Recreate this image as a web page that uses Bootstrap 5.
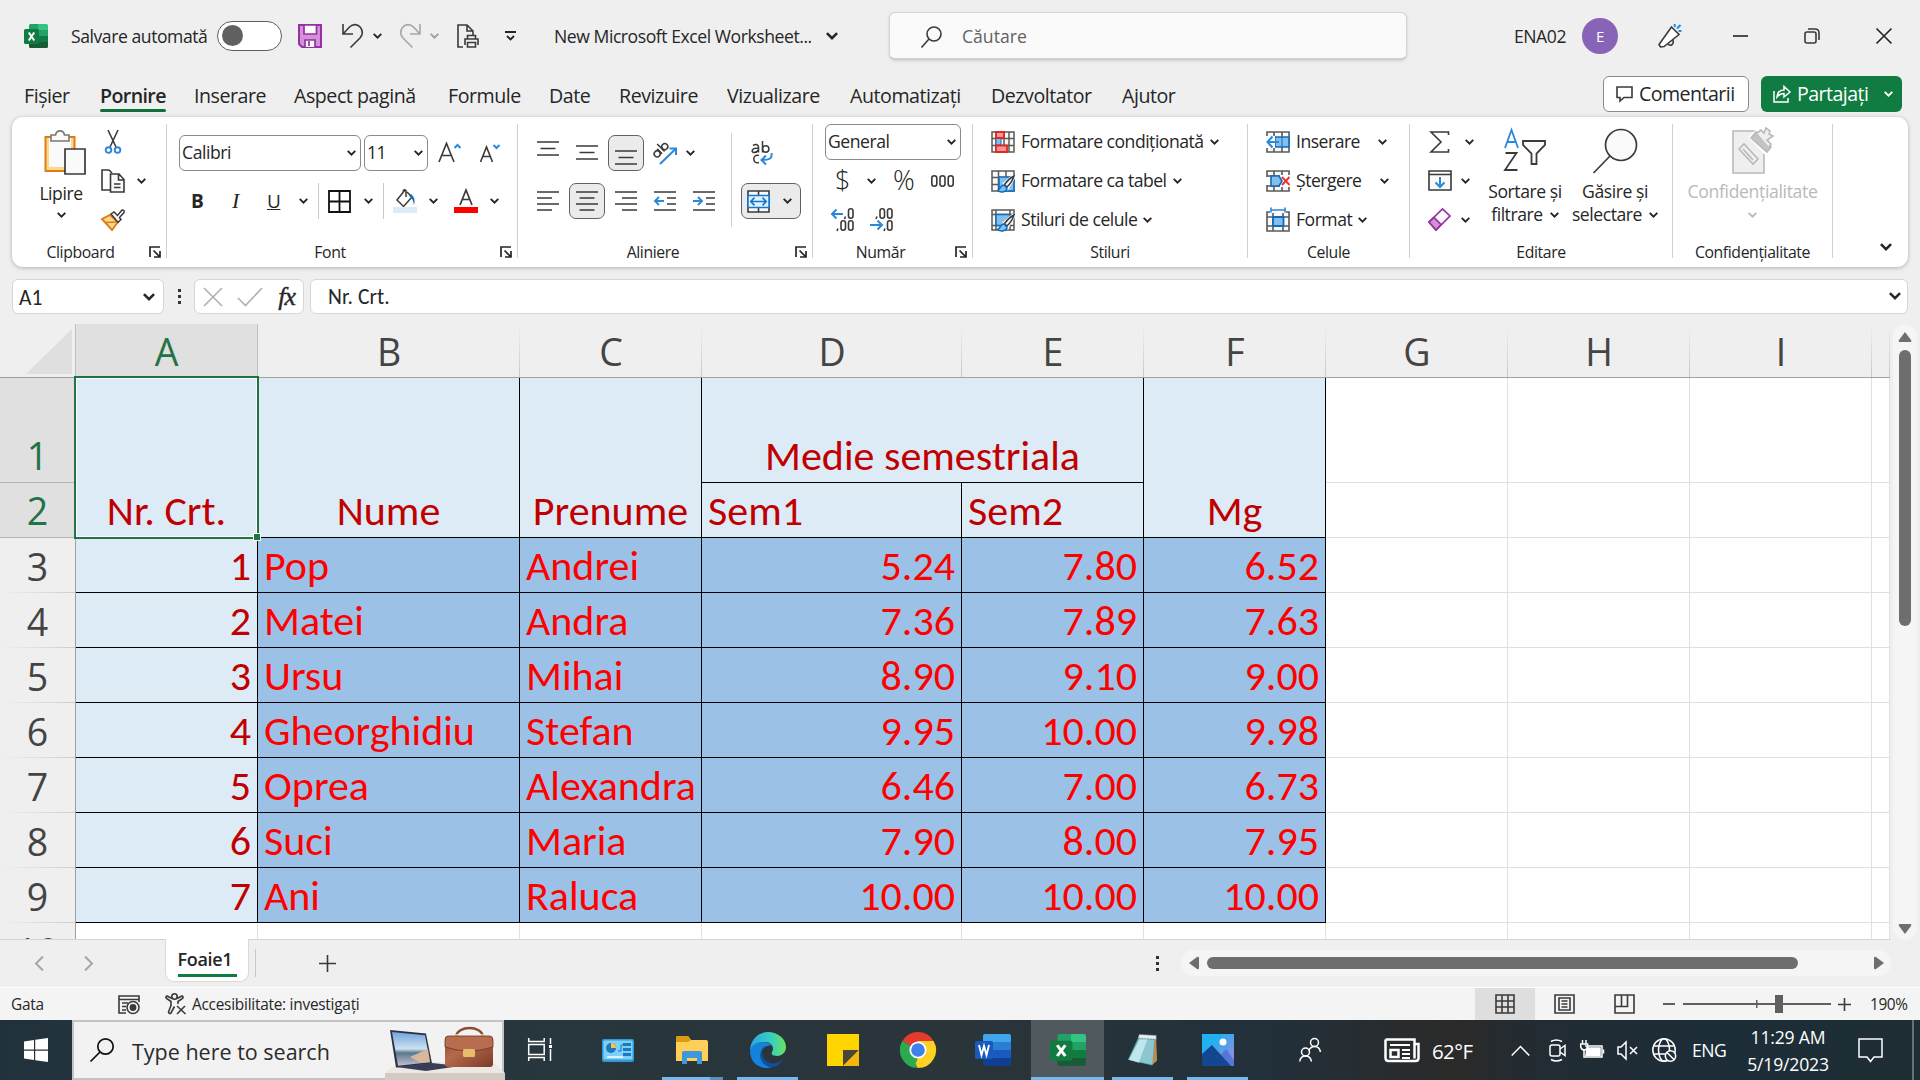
<!DOCTYPE html>
<html lang="ro">
<head>
<meta charset="utf-8">
<title>New Microsoft Excel Worksheet</title>
<link rel="stylesheet" href="https://cdn.jsdelivr.net/npm/bootstrap@5.3.0/dist/css/bootstrap.min.css">
<style>
body{width:1920px;height:1080px;overflow:hidden;background:#efefef;color:#262626;font-family:"Open Sans","Noto Sans",sans-serif;font-size:17.6px;letter-spacing:-.45px;line-height:1.2;white-space:nowrap}
svg{display:block;flex:none;overflow:visible}
.ic{fill:none;stroke:#3b3a39;stroke-width:1.6}
.chv{width:9px;height:6px;fill:none;stroke:#262626;stroke-width:1.9}
.chv-lg{width:12px;height:8px;fill:none;stroke:#262626;stroke-width:1.9}
.dim{opacity:.4}
.grow{display:grid;align-items:center}
.titlebar{height:72px;padding-left:24px;grid-template-columns:47px 146px 81px 44px 31px 26px 31px 27px 48px 49px 272px 63px 625px 68px 76px 75px 71px 72px 44px}
.titlebar>span,.status>span,.taskbar>span{padding-top:2px}
.toggle{width:65px;height:30px;border:1.5px solid #5e5e5e;border-radius:15px;background:#fff;padding:3px 4px}
.knob{width:21px;height:21px;border-radius:50%;background:#616161}
.searchbox{width:518px;height:48px;background:#fafafa;border:1px solid #d4d4d4;border-bottom:2px solid #cfcfcf;border-radius:6px;padding:2px 0 0 31px;gap:20px;color:#616161;letter-spacing:0;box-shadow:0 1px 3px #0002}
.avatar{width:36px;height:36px;border-radius:50%;background:#8764b8;color:#fff;font-size:15px}
.tabs-row{height:45px;padding:2px 0 0 24px;font-size:19.6px;grid-template-columns:76px 94px 100px 154px 101px 70px 108px 123px 141px 131px 481px 158px 159px}
.tab-on{font-weight:600;position:relative;letter-spacing:-.6px}
.tab-on::after{content:"";position:absolute;left:0;top:25px;width:66px;height:3px;border-radius:2px;background:#0f703b}
.topbtn{height:36px;border-radius:6px;letter-spacing:-.55px;margin-top:-3px}
.btn-com{width:146px;border:1px solid #8a8a8a;background:#fff;padding-left:12px;gap:6px}
.btn-share{width:141px;background:#107c41;color:#fff;padding-left:12px;gap:6px}
.btn-share .chv{stroke:#fff;margin-left:10px}
.ribbon{height:150px;margin:0 12px;background:#fff;border-radius:11px;box-shadow:0 1px 4px #0004}
.grp{height:150px;flex:none}
.grp-body{height:121px}
.grp-label{height:28px;font-size:15.8px;letter-spacing:-.4px}
.grp-label span{flex:1;text-align:center}
.grp-label svg{margin-right:5px}
.w-font .grp-label span,.w-align .grp-label span,.w-num .grp-label span{padding-right:7px}
.sepv{width:1px;background:#d0d0d0;margin:7px 0 9px;flex:none}
.sep-s{width:1px;height:36px;background:#c8c8c8}
.sep-m{width:1px;height:94px;margin-top:16px;background:#d0d0d0}
.three{padding-top:5px}
.three>*{height:39px}
.two{padding-top:12px}
.two>*{height:48px}
.w-clip{width:154px}.w-font{width:350px}.w-align{width:294px}.w-num{width:159px}.w-sty{width:274px}.w-cel{width:161px}.w-edt{width:262px}.w-conf{width:159px}
.paste{width:54px;margin:13px 13px 0 22px}
.copyrow{gap:12px}
.combo{height:36px;border:1px solid #8a8a8a;border-radius:6px;padding:0 4px 0 2px;background:#fff}
.c-face{width:182px}.c-size{width:64px}.c-num{width:136px;margin:0 0 0 12px}
.pressed{width:36px;height:36px;border:1px solid #616161;border-radius:7px;background:#ebebeb}
.pressed.merge{width:60px;gap:13px;margin-left:9px;padding-right:3px}
.font1{padding-left:12px;grid-template-columns:185px 75px 41px 30px}
.font2{padding-left:24px;grid-template-columns:39px 37px 32px 19px 10px 36px 19px 10px 36px 25px 36px 10px}
.fmt{font-size:19px}
.fmt.ital{font-family:"Liberation Serif",serif;font-style:italic;font-size:22px;padding-left:2px}
.align1{padding-left:19px;width:213px;grid-template-columns:39px 32px 44px 34px 20px}
.align2{padding-left:19px;width:213px;grid-template-columns:32px 46px 39px 39px 22px}
.num2{padding-left:22px;grid-template-columns:32px 26px 38px 30px}
.num3{padding-left:18px;grid-template-columns:39px 30px}
.dollar{font-size:27px;font-weight:300}.pct{font-size:27px;font-weight:300;letter-spacing:-2px}
.line-item{padding-left:18px;gap:6px;letter-spacing:-.5px}
.line-item .far{margin-left:12px}
.edt-l{padding-left:18px;width:68px}
.edt-l>*{grid-template-columns:33px 10px}
.bigbtn{line-height:23px;padding-top:11px;text-align:center}
.bigbtn svg.pic{margin:0 auto 6px}
.bigbtn .chv{display:inline-block;vertical-align:3px;margin-left:3px}
.sortbtn{width:86px}.findbtn{width:94px}
.greyed{color:#b9b9b9;letter-spacing:-.35px}
.greyed .chv{stroke:#b9b9b9;margin-left:0}
.fbar{height:57px;padding:12px 12px 10px}
.fbox{height:35px;background:#fff;border:1px solid #d6d6d6;border-radius:6px}
.namebox{width:152px;padding:0 8px 0 6px}
.fxbox{width:110px;padding:0 8px 0 9px}
.formula{margin-left:6px;padding:2px 6px 0 17px}
.fdots{width:30px}
.cal{font-family:Calibri,Carlito,Lato,sans-serif;letter-spacing:.1px;font-size:21.5px}
.fxglyph{font-family:"Liberation Serif",serif;font-style:italic;font-size:26px;letter-spacing:-1px;-webkit-text-stroke:.4px #262626}
.sheet{height:616px;width:1890px;overflow:hidden;flex:none;border-bottom:1px solid #d4d4d4}
.cells{table-layout:fixed;border-collapse:separate;border-spacing:0;width:1890px;letter-spacing:0;color:inherit}
.cells col.c0{width:76px}.cells col.c182{width:182px}.cells col.c262{width:262px}.cells col.c260{width:260px}.cells col.cl{width:18px}
.cells th{font-size:37.5px;font-weight:400;color:#444;padding:0;line-height:52px;text-align:center;height:55px;vertical-align:bottom}
.cells thead th{height:54px;line-height:51px;border-bottom:1px solid #a0a0a0;background:linear-gradient(#efefef,#c8c8c8) right/1px 100% no-repeat #efefef}
.cells thead th.on{background:#e0e0e0;border-right:1px solid #c0c0c0;color:#217346}
.cells thead th.corner{background:#efefef;border-right:1px solid #c0c0c0}
.cells tbody th{border-right:1px solid #a0a0a0;background:linear-gradient(90deg,#efefef,#cdcdcd) bottom/100% 1px no-repeat #efefef}
.cells tbody th.on{background:#e0e0e0;color:#217346;border-bottom:1px solid #b5b5b5}
.cells td{font-family:Calibri,Carlito,Lato,sans-serif;font-size:42px;line-height:52px;height:55px;padding:0 6px;vertical-align:bottom;background:#fff;border-right:1px solid #e0e0e0;border-bottom:1px solid #e0e0e0;overflow:visible}
.cells tr.tall>th{height:105px}
.cells td.hd{background:#ddebf7;color:#c00000;border-color:#000}
.cells td.dt{background:#9bc2e6;color:#f00;border-color:#000}
.selbox{position:absolute;left:-2px;top:-2px;right:-2px;bottom:-2px;border:2px solid #217346;box-shadow:inset 0 0 0 1px #fff;z-index:2}
.selbox::after{content:"";position:absolute;right:-3px;bottom:-3px;width:6px;height:6px;background:#217346;outline:1px solid #fff}
.vscroll{width:24px;margin-left:3px;height:616px;border-radius:12px;background:#f5f5f5;padding:8px 0 6px}
.vthumb{width:12px;height:276px;border-radius:6px;background:#6e6e6e;margin-top:8px}
.sheetbar{height:47px;padding:0 0 1px 35px;grid-template-columns:49px 81px 90px 64px 837px 25px 710px}
.sheet-tab{width:84px;height:43px;background:#fff;border:1px solid #d9d9d9;border-top:0;border-radius:0 0 9px 9px;align-self:start;margin-top:-1px}
.sheet-tab b{font-weight:600;letter-spacing:-.35px;border-bottom:3px solid #107c41;line-height:28px;height:32px;margin-top:6px;min-width:59px;font-size:18px}
.hscroll{width:710px;height:26px;border-radius:13px;background:#f5f5f5;padding:0 7px 0 8px;margin-top:-1px}
.hthumb{width:591px;height:12px;border-radius:6px;background:#6e6e6e;margin-left:8px}
.status{height:33px;background:#f4f4f4;border-top:1px solid #fff;padding-left:11px;font-size:15.4px;letter-spacing:-.25px;grid-template-columns:107px 47px 27px 1283px 79px 60px 49px 20px 155px 32px 45px}
.status>span:last-child{letter-spacing:-.4px}
.view-on{width:60px;height:32px;background:#dedede}
.taskbar{height:60px;padding-left:24px;color:#fff;background:linear-gradient(90deg,#22323c,#27363d 26%,#2a353a 50%,#22303a 66%,#2b2a29 76%,#222c33 80%,#1c2d38 90%,#1f2e33);grid-template-columns:48px 456px 59px 75px 75px 75px 75px 75px 69px 81px 75px 112px 85px 48px 79px 38px 31px 37px 35px 40px 48px 118px 54px 8px}
.tsearch{width:432px;height:60px;background:#f2f2f2;border:2.5px solid #c3c3c3;color:#2b2b2b;font-size:21.5px;letter-spacing:0;padding-left:16px;gap:18px}
.tsearch span{padding-top:3px}
.tsearch .art{margin:0 -2.5px -2.5px auto}
.app{width:61px;height:60px;display:flex;align-items:center;justify-content:center;position:relative}
.run::after{content:"";position:absolute;bottom:0;left:0;right:0;height:3px;background:#76b9ed}
.run.multi::after{background:linear-gradient(90deg,#76b9ed 78%,#5f8fb5 78%)}
.app.cur{width:73px;background:#50595d}
.w{fill:none;stroke:#fff;stroke-width:1.5}
.temp{font-size:20.5px;letter-spacing:-.6px}
.clock{line-height:27px;text-align:center;width:96px;letter-spacing:-.2px;padding-top:2px}
</style>
<script src="https://cdn.jsdelivr.net/npm/bootstrap@5.3.0/dist/js/bootstrap.bundle.min.js"></script>
</head>
<body class="d-flex flex-column">
<svg width="0" height="0" class="position-absolute">
<symbol id="chev" viewBox="0 0 9 6"><path d="M.7 .8 4.5 4.6 8.3 .8"/></symbol>
<symbol id="launch" viewBox="0 0 12 12"><path d="M1 11V1h10M4.500 4.500l6 6M11 5v6H5" fill="none" stroke="#262626" stroke-width="1.700"/></symbol>
<symbol id="xl" viewBox="0 0 24 24" preserveAspectRatio="none"><path d="M5 1.500Q5 0 6.500 0H14v6H5z" fill="#21a366"/><path d="M14 0h8.500Q24 0 24 1.500V6H14z" fill="#33c481"/><path d="M5 6h9v6H5z" fill="#107c41"/><path d="M14 6h10v6H14z" fill="#21a366"/><path d="M5 12h9v6H5z" fill="#185c37"/><path d="M14 12h10v6H14z" fill="#107c41"/><path d="M5 18h19v4.500q0 1.500-1.500 1.500h-16Q5 24 5 22.500z" fill="#185c37"/><rect y="5" width="15" height="15" rx="1.500" fill="#107c41"/><path d="M4.800 8.500l5.400 8M10.200 8.500l-5.400 8" stroke="#fff" stroke-width="2" fill="none"/></symbol>
<symbol id="brush" viewBox="0 0 18 18"><path d="M17 1 8 9l2.500 3z" fill="#fff" stroke="#fff" stroke-width="4"/><path d="M17 1C13 3 10 6 7.500 9.500L10 12c3-3 6-7 7-11z" fill="#fafafa" stroke="#3b3a39" stroke-width="1.400"/><path d="M7 10c-4 0-3 4-6.500 5.500C4 18 10 17 10 13z" fill="#83beec" stroke="#0f6cbd" stroke-width="1.500"/></symbol>
</svg>

<header class="titlebar grow">
  <svg width="24" height="24"><use href="#xl"/></svg>
  <span>Salvare automată</span>
  <div class="toggle"><div class="knob"></div></div>
  <svg width="24" height="24" viewBox="0 0 24 24"><path d="M1 1h22v22H4l-3-3z" fill="#d490d8" stroke="#9332a0" stroke-width="2"/><path d="M6 1h12.500v9H6zM7 23v-7h10v7M11 17v5" fill="#fafafa" stroke="#9332a0" stroke-width="1.700"/></svg>
  <svg class="ic" width="22" height="24" viewBox="0 0 22 24"><path d="M1 0v10h10M1.500 9.500 7.500 3C11-.500 16 0 18.500 3.500S20.500 11 18 14L8.500 23.500"/></svg>
  <svg class="chv"><use href="#chev"/></svg>
  <svg class="ic dim" width="22" height="24" viewBox="0 0 22 24"><path d="M21 0v10H11M20.500 9.500 14.500 3C11-.500 6 0 3.500 3.500S1.500 11 4 14l9.500 9.500"/></svg>
  <svg class="chv dim"><use href="#chev"/></svg>
  <svg class="ic" width="22" height="24" viewBox="0 0 22 24"><path d="M6 23H1V1h9l6 6v4M10 1v6h6M10.500 15v-3.500h8V15M8 21v-6h13v6M10.500 18.500h8V23h-8z"/></svg>
  <svg class="ic" width="11" height="10" viewBox="0 0 11 10"><path d="M0 1h11M2 5l3.500 3.500L9 5" stroke="#262626" stroke-width="1.900"/></svg>
  <span>New Microsoft Excel Worksheet...</span>
  <svg class="chv-lg"><use href="#chev"/></svg>
  <div class="searchbox d-flex align-items-center"><svg class="ic" width="21" height="22" viewBox="0 0 21 22"><circle cx="13" cy="8" r="7"/><path d="M8 13 .500 21.500"/></svg>Căutare</div>
  <span>ENA02</span>
  <div class="avatar d-flex align-items-center justify-content-center">E</div>
  <svg class="ic" width="24" height="24" viewBox="0 0 24 24"><path d="M13.500 3 21 10.500 6 22.500l-3.500.5L1 20.500z" fill="#fff"/><path d="M10 20c3 3 6 0 5-4"/><path d="M16.500 0l.5 3M22.500 1 19 4.500M20.500 7h3" stroke="#2b88d8" stroke-width="2"/></svg>
  <svg class="ic" width="15" height="2"><path d="M0 1h15" stroke="#222"/></svg>
  <svg class="ic" width="16" height="16" viewBox="0 0 16 16"><rect x="1" y="4" width="11" height="11" rx="2"/><path d="M4 1h7q4 0 4 4v7"/></svg>
  <svg class="ic" width="16" height="16" viewBox="0 0 16 16"><path d="M.5.5l15 15M15.500.5l-15 15" stroke="#222"/></svg>
</header>

<nav class="tabs-row grow">
  <span>Fișier</span><span class="tab-on">Pornire</span><span>Inserare</span><span>Aspect pagină</span><span>Formule</span><span>Date</span><span>Revizuire</span><span>Vizualizare</span><span>Automatizați</span><span>Dezvoltator</span><span>Ajutor</span>
  <div class="topbtn btn-com d-flex align-items-center"><svg class="ic" width="17" height="16" viewBox="0 0 17 16"><path d="M1 1h15v10.500H8L4 15v-3.500H1z"/></svg>Comentarii</div>
  <div class="topbtn btn-share d-flex align-items-center"><svg width="18" height="18" viewBox="0 0 18 18" fill="none" stroke="#fff" stroke-width="1.500"><path d="M1 6v11h14v-4M4 12c.5-5 3-7 7-7V1.500L17 7l-6 5V8.500C8 8.500 6 9.500 4 12z"/></svg><span>Partajați</span><svg class="chv"><use href="#chev"/></svg></div>
</nav>

<section class="ribbon d-flex flex-shrink-0">
  <div class="grp w-clip">
    <div class="grp-body d-flex">
      <div class="paste d-flex flex-column align-items-center">
        <svg width="42" height="45" viewBox="0 0 42 45" class="ms-2"><path d="M1.500 7h29v34h-29z" fill="#fbd98b" stroke="#e07b16" stroke-width="2"/><path d="M5 8h22v29H5z" fill="#fafafa"/><path d="M7 11V5h4.500c1-5.500 8-5.500 9 0H25v6z" fill="#fafafa" stroke="#797775" stroke-width="1.600"/><path d="M21 19h20v25H21z" fill="#fafafa" stroke="#3b3a39" stroke-width="1.700"/></svg>
        <span class="mt-2">Lipire</span><svg class="chv mt-2"><use href="#chev"/></svg>
      </div>
      <div class="three">
        <div class="d-flex align-items-center ps-1"><svg class="ic" width="16" height="24" viewBox="0 0 16 24"><path d="M3 0l8 17M13 0 5 17"/><circle cx="3.500" cy="20" r="2.800" stroke="#2b88d8" stroke-width="1.900"/><circle cx="12.500" cy="20" r="2.800" stroke="#2b88d8" stroke-width="1.900"/></svg></div>
        <div class="copyrow d-flex align-items-center"><svg class="ic" width="24" height="24" viewBox="0 0 24 24"><path d="M9 21H1V1h7l3 3"/><path d="M9.500 5H18l5 5.500V23H9.500zM17.500 5v6H23M13 15h6.500M13 18.500h6.500" fill="#fafafa"/></svg><svg class="chv"><use href="#chev"/></svg></div>
        <div class="d-flex align-items-center"><svg width="24" height="22" viewBox="0 0 24 22"><path d="M1 10 9 6l8 7-6 8z" fill="#fbd98b" stroke="#e07b16" stroke-width="1.900"/><path d="M4 13.500l12-.5" stroke="#e07b16" stroke-width="1.500"/><path d="M10 5l3-2 3.500 3.500L21 1q3 0 2 2.500l-4.500 5 1.500 2-3 3z" fill="#fafafa" stroke="#3b3a39" stroke-width="1.500"/></svg></div>
      </div>
    </div>
    <div class="grp-label d-flex align-items-center"><span>Clipboard</span><svg width="12" height="12"><use href="#launch"/></svg></div>
  </div>
  <div class="sepv"></div>

  <div class="grp w-font">
    <div class="grp-body two">
      <div class="grow font1">
        <div class="combo c-face d-flex align-items-center justify-content-between">Calibri<svg class="chv"><use href="#chev"/></svg></div>
        <div class="combo c-size d-flex align-items-center justify-content-between">11<svg class="chv"><use href="#chev"/></svg></div>
        <svg class="ic" width="22" height="20" viewBox="0 0 22 20"><path d="M0 19 7.500.500 15 19M2.700 12.500h9.600"/><path d="M15.500 5l3-3 3 3" stroke="#2b88d8" stroke-width="2"/></svg>
        <svg class="ic" width="20" height="20" viewBox="0 0 20 20"><path d="M.5 19 6.500 4l6 15M2.500 13.500h8"/><path d="M13.500 2l3 3 3-3" stroke="#2b88d8" stroke-width="2"/></svg>
      </div>
      <div class="grow font2">
        <b class="fmt">B</b><span class="fmt ital">I</span><u class="fmt">U</u><svg class="chv"><use href="#chev"/></svg><div class="sep-s"></div>
        <svg width="23" height="23" viewBox="0 0 23 23"><path d="M1 1h21v21H1zM11.500 1v21M1 11.500h21" fill="none" stroke="#111" stroke-width="1.800"/></svg>
        <svg class="chv"><use href="#chev"/></svg><div class="sep-s"></div>
        <svg width="24" height="24" viewBox="0 0 24 24"><path d="M12 1 4 11l6.500 6.500L19 8l-5-5M13 8V1.500q-2-2-3 1" fill="none" stroke="#3b3a39" stroke-width="1.500"/><path d="M18 5q5 4 3 11-1-7-5-9z" fill="#0f6cbd"/><path d="M0 18h24v6H0z" fill="#ddebf7"/></svg>
        <svg class="chv"><use href="#chev"/></svg>
        <svg width="24" height="24" viewBox="0 0 24 24"><path d="M6 16 12 1l6 15M8.200 10.500h7.600" fill="none" stroke="#3b3a39" stroke-width="1.700"/><path d="M0 18h24v6H0z" fill="#f00"/></svg>
        <svg class="chv"><use href="#chev"/></svg>
      </div>
    </div>
    <div class="grp-label d-flex align-items-center"><span>Font</span><svg width="12" height="12"><use href="#launch"/></svg></div>
  </div>
  <div class="sepv"></div>

  <div class="grp w-align">
    <div class="grp-body d-flex">
      <div class="two">
        <div class="grow align1">
          <svg class="ic" width="22" height="24" viewBox="0 0 22 24"><path d="M0 1h22M3.500 7.500h15M0 14h22"/></svg>
          <svg class="ic" width="22" height="24" viewBox="0 0 22 24"><path d="M0 5h22M3.500 11.500h15M0 18h22"/></svg>
          <div class="pressed d-flex align-items-center justify-content-center"><svg class="ic" width="22" height="24" viewBox="0 0 22 24"><path d="M0 10h22M3.500 16.500h15M0 23h22"/></svg></div>
          <svg width="25" height="24" viewBox="0 0 25 24" fill="none" stroke="#3b3a39" stroke-width="1.500"><g transform="rotate(-45 8 10)"><circle cx="4" cy="10" r="3"/><path d="M7.500 6.500v7M11 3v10.500"/><circle cx="14.500" cy="10.300" r="3"/></g><path d="M8 23 23.500 8M17.500 7.500H24V14" stroke="#2b88d8" stroke-width="2"/></svg>
          <svg class="chv"><use href="#chev"/></svg>
        </div>
        <div class="grow align2">
          <svg class="ic" width="22" height="20" viewBox="0 0 22 20"><path d="M0 1h22M0 7h15M0 13h22M0 19h15"/></svg>
          <div class="pressed d-flex align-items-center justify-content-center"><svg class="ic" width="22" height="20" viewBox="0 0 22 20"><path d="M0 1h22M3.500 7h15M0 13h22M3.500 19h15"/></svg></div>
          <svg class="ic" width="22" height="20" viewBox="0 0 22 20"><path d="M0 1h22M7 7h15M0 13h22M7 19h15"/></svg>
          <svg class="ic" width="22" height="20" viewBox="0 0 22 20"><path d="M0 1h22M13 7h9M13 13h9M0 19h22"/><path d="M10 10H1M5 6l-4 4 4 4" stroke="#2b88d8" stroke-width="1.900"/></svg>
          <svg class="ic" width="22" height="20" viewBox="0 0 22 20"><path d="M0 1h22M13 7h9M13 13h9M0 19h22"/><path d="M0 10h9M5 6l4 4-4 4" stroke="#2b88d8" stroke-width="1.900"/></svg>
        </div>
      </div>
      <div class="sep-m"></div>
      <div class="two">
        <div class="d-flex align-items-center ps-3 ms-1">
          <svg width="21" height="24" viewBox="0 0 21 24" fill="none" stroke="#3b3a39" stroke-width="1.500"><path d="M1 4.500q4-2.500 5.500 1v6M6.500 7.500C-1 6.500-1 11.500 2 11.500q3 0 4.500-2.500M10.500 0v11.500"/><circle cx="13.700" cy="8" r="3.200"/><path d="M7 14.500c-7-2-7 9 0 7"/><path d="M19.500 12c1 6-3 7-9 7M14 14.500 9.500 19l4.500 4.500" stroke="#2b88d8" stroke-width="2"/></svg>
        </div>
        <div class="d-flex align-items-center">
          <div class="pressed merge d-flex align-items-center justify-content-center"><svg width="23" height="23" viewBox="0 0 23 23"><path d="M1 1h21v21H1zM11.500 1v5M11.500 17v5" fill="#fafafa" stroke="#3b3a39" stroke-width="1.600"/><path d="M1 5.500h21v12H1z" fill="#e6f2fb" stroke="#0f7ad1" stroke-width="1.500"/><path d="M4 11.500h15M7.500 7.700 3.800 11.500l3.700 3.800M15.500 7.700l3.700 3.800-3.700 3.800" fill="none" stroke="#0f7ad1" stroke-width="1.700"/></svg><svg class="chv"><use href="#chev"/></svg></div>
        </div>
      </div>
    </div>
    <div class="grp-label d-flex align-items-center"><span>Aliniere</span><svg width="12" height="12"><use href="#launch"/></svg></div>
  </div>
  <div class="sepv"></div>

  <div class="grp w-num">
    <div class="grp-body three">
      <div class="d-flex align-items-center"><div class="combo c-num d-flex align-items-center justify-content-between">General<svg class="chv"><use href="#chev"/></svg></div></div>
      <div class="grow num2"><span class="dollar">$</span><svg class="chv"><use href="#chev"/></svg><span class="pct">%</span>
        <svg class="ic" width="23" height="12" viewBox="0 0 23 12" stroke-width="1.300"><rect x=".8" y=".8" width="5" height="10.400" rx="2.500"/><rect x="9" y=".8" width="5" height="10.400" rx="2.500"/><rect x="17.200" y=".8" width="5" height="10.400" rx="2.500"/></svg></div>
      <div class="grow num3">
        <svg class="ic" width="23" height="23" viewBox="0 0 23 23"><rect x="17.500" y=".8" width="4.500" height="9.400" rx="2.200"/><rect x="10" y="12.800" width="4.500" height="9.400" rx="2.200"/><rect x="17.500" y="12.800" width="4.500" height="9.400" rx="2.200"/><path d="M14.500 8.500 13.500 11M7 20.500 6 23"/><path d="M12 6H1M5.500 1.500 1 6l4.500 4.500" stroke="#2b88d8" stroke-width="2"/></svg>
        <svg class="ic" width="23" height="23" viewBox="0 0 23 23"><rect x="10" y=".8" width="4.500" height="9.400" rx="2.200"/><rect x="17.500" y=".8" width="4.500" height="9.400" rx="2.200"/><rect x="17.500" y="12.800" width="4.500" height="9.400" rx="2.200"/><path d="M7 8.500 6 11M15 20.500 14 23"/><path d="M0 17h12M7.500 12.500 12 17l-4.500 4.500" stroke="#2b88d8" stroke-width="2"/></svg>
      </div>
    </div>
    <div class="grp-label d-flex align-items-center"><span>Număr</span><svg width="12" height="12"><use href="#launch"/></svg></div>
  </div>
  <div class="sepv"></div>

  <div class="grp w-sty">
    <div class="grp-body three">
      <div class="line-item d-flex align-items-center"><svg width="24" height="22" viewBox="0 0 24 22"><path d="M1 1h22v20H1zM1 7.500h22M1 14.500h22M5 1v20M13 1v20M18 1v20" fill="#fafafa" stroke="#5a5957" stroke-width="1.500"/><path d="M5 7h5v7H5z" fill="#83beec" stroke="#0f6cbd"/><path d="M5 1h8v6H5zM5 14.500h11V21H5z" fill="#ff9199" stroke="#d92c20" stroke-width="1.800"/></svg>Formatare condiționată<svg class="chv"><use href="#chev"/></svg></div>
      <div class="line-item d-flex align-items-center"><svg width="24" height="22" viewBox="0 0 24 22"><path d="M1 1h22v20H1zM1 7.500h22M1 14.500h22M7.500 1v20M15 1v20" fill="#fafafa" stroke="#5a5957" stroke-width="1.500"/><path d="M8 7h15v14H8z" fill="#83beec" stroke="#0f6cbd" stroke-width="1.500"/><use href="#brush" x="6" y="5" width="18" height="18"/></svg>Formatare ca tabel<svg class="chv"><use href="#chev"/></svg></div>
      <div class="line-item d-flex align-items-center"><svg width="24" height="22" viewBox="0 0 24 22"><path d="M1 1h22v20H1zM1 5.500h22M1 16.500h22M5 1v20M19 1v20" fill="#fafafa" stroke="#5a5957" stroke-width="1.500"/><path d="M5 5.500h14v11H5z" fill="#83beec" stroke="#0f6cbd" stroke-width="1.500"/><use href="#brush" x="6" y="5" width="18" height="18"/></svg>Stiluri de celule<svg class="chv"><use href="#chev"/></svg></div>
    </div>
    <div class="grp-label d-flex align-items-center"><span>Stiluri</span></div>
  </div>
  <div class="sepv"></div>

  <div class="grp w-cel">
    <div class="grp-body three">
      <div class="line-item d-flex align-items-center"><svg width="24" height="22" viewBox="0 0 24 22"><path d="M1 1h22v20H1zM8 1v20M16 1v20" fill="#fafafa" stroke="#5a5957" stroke-width="1.600"/><path d="M9 6h14v10H9z" fill="#83beec" stroke="#0f6cbd" stroke-width="1.600"/><path d="M0 5h9v12H0z" fill="#fff"/><path d="M16 6v10" stroke="#0f6cbd"/><path d="M13 11H1.500M6.500 5.500 1.500 11l5 5.500" fill="none" stroke="#2b88d8" stroke-width="2.100"/></svg>Inserare<svg class="chv far"><use href="#chev"/></svg></div>
      <div class="line-item d-flex align-items-center"><svg width="24" height="22" viewBox="0 0 24 22"><path d="M1 1h22v20H1zM1 6h22M1 16h22M8 1v20M16 1v20" fill="#fafafa" stroke="#5a5957" stroke-width="1.600"/><path d="M0 7h4v8H0zM14 5h10v12H14z" fill="#fff"/><path d="M5 6h8l3 5-3 5H5z" fill="#83beec" stroke="#0f6cbd" stroke-width="1.600"/><path d="M16 7l7.500 8M23.500 7 16 15" stroke="#e8382e" stroke-width="2"/></svg>Ștergere<svg class="chv far"><use href="#chev"/></svg></div>
      <div class="line-item d-flex align-items-center"><svg width="24" height="24" viewBox="0 0 24 24"><path d="M4 4H1v19h22V4h-3M1 9h22M1 18h22M7 5v18M17 5v18" fill="#fafafa" stroke="#5a5957" stroke-width="1.600"/><path d="M7 9h10.500v9H7z" fill="#83beec" stroke="#0f6cbd" stroke-width="1.800"/><path d="M5 2h14M5-.500v5M19-.500v5" stroke="#2b88d8" stroke-width="1.600"/></svg>Format<svg class="chv"><use href="#chev"/></svg></div>
    </div>
    <div class="grp-label d-flex align-items-center"><span>Celule</span></div>
  </div>
  <div class="sepv"></div>

  <div class="grp w-edt">
    <div class="grp-body d-flex">
      <div class="edt-l three">
        <div class="grow"><svg class="ic" width="22" height="22" viewBox="0 0 22 22"><path d="M20.500 4V1H3l10 10L3 21h17.500v-3"/></svg><svg class="chv ms-1"><use href="#chev"/></svg></div>
        <div class="grow"><svg class="ic" width="24" height="21" viewBox="0 0 24 21"><path d="M1 1h22v19H1zM1 4.500h22" fill="#fafafa"/><path d="M12 7v10M7.500 12.500 12 17l4.500-4.500" stroke="#2b88d8" stroke-width="2"/></svg><svg class="chv"><use href="#chev"/></svg></div>
        <div class="grow"><svg width="23" height="23" viewBox="0 0 23 23"><path d="M1 14 14.500 1l7.500 7L8 22z" fill="#fafafa" stroke="#9332a0" stroke-width="1.700"/><path d="M1 14l5-4.500 7 7L8 22z" fill="#d490d8" stroke="#9332a0" stroke-width="1.700"/></svg><svg class="chv"><use href="#chev"/></svg></div>
      </div>
      <div class="bigbtn sortbtn ms-1"><svg class="pic" width="42" height="46" viewBox="0 0 42 46" fill="none" stroke-width="1.800"><path d="M1 20 7.500 2l6.500 18M3 14h9" stroke="#2b88d8"/><path d="M1.500 25h11L1 42h12.500" stroke="#3b3a39"/><path d="M19 13h22v4l-8.500 8.500V36h-5V25.500L19 17z" fill="#fafafa" stroke="#3b3a39"/></svg>Sortare și<br>filtrare <svg class="chv"><use href="#chev"/></svg></div>
      <div class="bigbtn findbtn"><svg class="pic" width="44" height="46" viewBox="0 0 44 46" fill="none" stroke="#3b3a39" stroke-width="1.700"><circle cx="28" cy="17" r="15.500" fill="#fafafa"/><path d="M17 28 .500 45"/></svg>Găsire și<br>selectare <svg class="chv"><use href="#chev"/></svg></div>
    </div>
    <div class="grp-label d-flex align-items-center"><span>Editare</span></div>
  </div>
  <div class="sepv"></div>

  <div class="grp w-conf">
    <div class="grp-body">
      <div class="bigbtn greyed"><svg class="pic" width="42" height="46" viewBox="0 0 42 46" fill="#efefef" stroke="#b9b9b9" stroke-width="1.600"><path d="M1 3h31v42H1z"/><path d="M16 9 29-3l15 17-11 13z" fill="#fff" stroke="none"/><path d="M7 21l5-5 14 15-5 5zM11 21l10 11"/><path d="M19 10l5-6 15 15-4 5z" fill="#c4c4c4"/><path d="M25 5l4-3 3 3 2-5 4 3-1 3 4 2-6 4 4 4-2 3"/></svg>Confidențialitate<br><svg class="chv"><use href="#chev"/></svg></div>
    </div>
    <div class="grp-label d-flex align-items-center"><span>Confidențialitate</span></div>
  </div>
  <div class="sepv"></div>
  <div class="ms-auto d-flex align-items-end pe-3 pb-3"><svg class="chv-lg"><use href="#chev"/></svg></div>
</section>

<section class="fbar d-flex align-items-start flex-shrink-0">
  <div class="fbox namebox d-flex align-items-center justify-content-between cal"><span class="pt-1">A1</span><svg class="chv-lg"><use href="#chev"/></svg></div>
  <div class="fdots fbox bg-transparent border-0 d-flex align-items-center justify-content-center"><svg width="3" height="15" fill="#333"><path d="M0 0h3v3H0zM0 6h3v3H0zM0 12h3v3H0z"/></svg></div>
  <div class="fbox fxbox d-flex align-items-center justify-content-between">
    <svg class="ic dim" width="18" height="18" viewBox="0 0 18 18"><path d="M0 0l18 18M18 0 0 18"/></svg>
    <svg class="ic dim" width="24" height="18" viewBox="0 0 24 18"><path d="M0 10l7.500 7.500L24 0"/></svg>
    <span class="fxglyph">fx</span>
  </div>
  <div class="fbox formula flex-grow-1 d-flex align-items-center justify-content-between cal"><span>Nr. Crt.</span><svg class="chv-lg mb-1"><use href="#chev"/></svg></div>
</section>

<main class="d-flex flex-shrink-0">
<div class="sheet">
<table class="cells">
<colgroup><col class="c0"><col class="c182"><col class="c262"><col class="c182"><col class="c260"><col class="c182"><col class="c182"><col class="c182"><col class="c182"><col class="c182"><col class="cl"></colgroup>
<thead><tr><th class="corner"><svg width="76" height="53"><path d="M72 5v45H26z" fill="#dfdfdf"/></svg></th><th class="on">A</th><th>B</th><th>C</th><th>D</th><th>E</th><th>F</th><th>G</th><th>H</th><th>I</th><th></th></tr></thead>
<tbody>
<tr class="tall"><th class="on">1</th><td class="hd text-center position-relative px-0" rowspan="2">Nr. Crt.<div class="selbox"></div></td><td class="hd text-center" rowspan="2">Nume</td><td class="hd text-center px-0" rowspan="2">Prenume</td><td class="hd text-center" colspan="2">Medie semestriala</td><td class="hd text-center" rowspan="2">Mg</td><td></td><td></td><td></td><td></td></tr>
<tr><th class="on">2</th><td class="hd">Sem1</td><td class="hd">Sem2</td><td></td><td></td><td></td><td></td></tr>
<tr><th>3</th><td class="hd text-end">1</td><td class="dt">Pop</td><td class="dt">Andrei</td><td class="dt text-end">5.24</td><td class="dt text-end">7.80</td><td class="dt text-end">6.52</td><td></td><td></td><td></td><td></td></tr>
<tr><th>4</th><td class="hd text-end">2</td><td class="dt">Matei</td><td class="dt">Andra</td><td class="dt text-end">7.36</td><td class="dt text-end">7.89</td><td class="dt text-end">7.63</td><td></td><td></td><td></td><td></td></tr>
<tr><th>5</th><td class="hd text-end">3</td><td class="dt">Ursu</td><td class="dt">Mihai</td><td class="dt text-end">8.90</td><td class="dt text-end">9.10</td><td class="dt text-end">9.00</td><td></td><td></td><td></td><td></td></tr>
<tr><th>6</th><td class="hd text-end">4</td><td class="dt">Gheorghidiu</td><td class="dt">Stefan</td><td class="dt text-end">9.95</td><td class="dt text-end">10.00</td><td class="dt text-end">9.98</td><td></td><td></td><td></td><td></td></tr>
<tr><th>7</th><td class="hd text-end">5</td><td class="dt">Oprea</td><td class="dt">Alexandra</td><td class="dt text-end">6.46</td><td class="dt text-end">7.00</td><td class="dt text-end">6.73</td><td></td><td></td><td></td><td></td></tr>
<tr><th>8</th><td class="hd text-end">6</td><td class="dt">Suci</td><td class="dt">Maria</td><td class="dt text-end">7.90</td><td class="dt text-end">8.00</td><td class="dt text-end">7.95</td><td></td><td></td><td></td><td></td></tr>
<tr><th>9</th><td class="hd text-end">7</td><td class="dt">Ani</td><td class="dt">Raluca</td><td class="dt text-end">10.00</td><td class="dt text-end">10.00</td><td class="dt text-end">10.00</td><td></td><td></td><td></td><td></td></tr>
<tr><th>10</th><td></td><td></td><td></td><td></td><td></td><td></td><td></td><td></td><td></td><td></td></tr>
</tbody>
</table>
</div>
<div class="vscroll d-flex flex-column align-items-center"><svg width="14" height="10" fill="#6e6e6e"><path d="M7 0l6 8q1 2-1 2H2Q0 10 1 8z"/></svg><div class="vthumb"></div><svg class="mt-auto" width="14" height="10" fill="#6e6e6e"><path d="M7 10 1 2Q0 0 2 0h10q2 0 1 2z"/></svg></div>
</main>

<section class="sheetbar grow flex-shrink-0">
  <svg class="ic dim" width="9" height="15" viewBox="0 0 9 15"><path d="M8 .5 1 7.500l7 7" stroke-width="2"/></svg>
  <svg class="ic dim" width="9" height="15" viewBox="0 0 9 15"><path d="M1 .5l7 7-7 7" stroke-width="2"/></svg>
  <div class="sheet-tab d-flex justify-content-center"><b>Foaie1</b></div>
  <svg width="16" height="28"><path d="M.5 0v28" stroke="#c8c8c8"/></svg>
  <svg class="ic" width="17" height="17" viewBox="0 0 17 17"><path d="M8.500 0v17M0 8.500h17"/></svg>
  <svg width="3" height="15" fill="#333"><path d="M0 0h3v3H0zM0 6h3v3H0zM0 12h3v3H0z"/></svg>
  <div class="hscroll d-flex align-items-center"><svg width="10" height="14" fill="#6e6e6e"><path d="M0 7l8-6q2-1 2 1v10q0 2-2 1z"/></svg><div class="hthumb"></div><svg class="ms-auto" width="10" height="14" fill="#6e6e6e"><path d="M10 7 2 1Q0 0 0 2v10q0 2 2 1z"/></svg></div>
</section>

<section class="status grow flex-shrink-0">
  <span>Gata</span>
  <svg class="ic" width="22" height="19" viewBox="0 0 22 19"><path d="M8 18H1V1h20v6M1 4.500h20M4 8h6M4 11.500h4M4 15h4"/><circle cx="15" cy="12.500" r="6"/><circle cx="15" cy="12.500" r="2.600" fill="#3b3a39"/></svg>
  <svg class="ic" width="22" height="22" viewBox="0 0 22 22"><circle cx="9.500" cy="3.500" r="2.700"/><path d="M7 5.500 2 3Q0 4 1.500 5.500L6 8.500v4L3.500 19q.5 2.500 2.500 1l3.500-6.500M12 5.500 17 3q2 1 .5 2.500L13 8.500V11M12 13l8.500 8M20 13l-8 8"/></svg>
  <span>Accesibilitate: investigați</span>
  <div class="view-on d-flex align-items-center justify-content-center"><svg class="ic" width="20" height="20" viewBox="0 0 20 20"><path d="M1 1h18v18H1zM1 7h18M1 13h18M7 1v18M13 1v18"/></svg></div>
  <svg class="ic" width="21" height="20" viewBox="0 0 21 20"><path d="M1 1h19v18H1zM5 4h11v12H5zM7.500 7h6M7.500 10h6M7.500 13h6"/></svg>
  <svg class="ic" width="21" height="20" viewBox="0 0 21 20"><path d="M1 1h19v18H1zM7.500 1v11M1 12.500h12.500V1"/></svg>
  <svg class="ic" width="12" height="2"><path d="M0 1h12"/></svg>
  <svg width="148" height="18" viewBox="0 0 148 18" fill="#606060"><path d="M0 8h148v2H0zM73 5h1.500v8H73zM92 0h8v18h-8z"/></svg>
  <svg class="ic" width="13" height="13" viewBox="0 0 13 13"><path d="M6.500 0v13M0 6.500h13"/></svg>
  <span>190%</span>
</section>

<footer class="taskbar grow flex-shrink-0">
  <svg width="24" height="24" viewBox="0 0 24 24" fill="#fff"><path d="M0 3.500 10 2v9.500H0zM11.200 1.800 24 0v11.500H11.200zM0 12.700h10V22L0 20.500zM11.200 12.700H24V24l-12.800-1.800z"/></svg>
  <div class="tsearch d-flex align-items-center">
    <svg width="24" height="24" viewBox="0 0 24 24" fill="none" stroke="#111" stroke-width="1.700"><circle cx="15.500" cy="8.500" r="7.700"/><path d="M10 14 .500 23.500"/></svg><span>Type here to search</span>
    <svg class="art" width="120" height="60" viewBox="0 0 120 60">
      <defs><linearGradient id="scr" x2="0" y2="1"><stop offset="0" stop-color="#6fa4dc"/><stop offset=".5" stop-color="#cfe0ef"/><stop offset=".62" stop-color="#57788f"/><stop offset="1" stop-color="#c3bfd0"/></linearGradient><linearGradient id="bag" x2="1" y2="1"><stop offset="0" stop-color="#8b4a33"/><stop offset=".4" stop-color="#b5694c"/><stop offset="1" stop-color="#7a3a27"/></linearGradient></defs>
      <path d="M0 52 14 41h94l12 11v8H0z" fill="#ece8e3"/><path d="M0 52h120v8H0z" fill="#d3cbc3"/>
      <path d="M5 9l36 3.500 6 30-36 4z" fill="#2d2f45"/><path d="M7 11l33 3.200 5 27-32 3.500z" fill="url(#scr)"/><path d="M25 36 43 28l2 13-9 1z" fill="#d9b79b"/><path d="M11 46l36-4 28 3-34 5z" fill="#3a3d55"/>
      <path d="M71 16c1-12 26-12 27 0" fill="none" stroke="#8b4a33" stroke-width="2.500"/><path d="M70 13h3v5h-3zM96 13h3v5h-3z" fill="#e8c27a"/><rect x="60" y="15" width="48" height="31" rx="3" fill="url(#bag)"/><path d="M60 20q0-5 4-5h40q4 0 4 5v6q-24 8-48 0z" fill="#b86d4f" stroke="#6b3323" stroke-width=".8"/><rect x="78" y="28" width="12" height="8" rx="1.500" fill="#e8bd6a"/>
    </svg>
  </div>
  <svg class="w" width="24" height="24" viewBox="0 0 24 24"><path d="M.7 0v3.500h15.500V0M.7 6.500h15.500v10H.7zM.7 23v-3.500h15.500V23M22.500 0v6M22.500 11v12"/><path d="M21 7h3v3h-3z" fill="#fff" stroke="none"/></svg>
  <div class="app"><svg width="32" height="23" viewBox="0 0 32 23"><rect width="32" height="23" rx="2" fill="#2f9ad8"/><rect x="1.500" y="1.500" width="29" height="19" rx="1" fill="#7fd0f7"/><circle cx="9" cy="9" r="5" fill="#1c78c0"/><path d="M9 9V4a5 5 0 0 1 5 5z" fill="#ffc530"/><path d="M16 12h3V6h3" stroke="#1c78c0" fill="none"/><path d="M21 4h8v3h-8zM21 9h8v3h-8zM21 14h8v3h-8z" fill="#1c78c0"/><path d="M5 18h16" stroke="#d9f0ff" stroke-width="2"/></svg></div>
  <div class="app run multi"><svg width="33" height="28" viewBox="0 0 33 28"><path d="M0 2Q0 0 2 0h10l3 4h15q2 0 2 2v19H0z" fill="#ffcf57"/><path d="M0 1.500Q0 0 2 0h10l3 4-3 2H0z" fill="#d99b10"/><path d="M6 28V17q0-2 2-2h16q2 0 2 2v11h-5v-6H11v6z" fill="#3d99dd"/></svg></div>
  <div class="app run"><svg width="36" height="36" viewBox="0 0 36 36"><defs><linearGradient id="e1" x2="1"><stop offset="0" stop-color="#2aa6e0"/><stop offset=".6" stop-color="#38cfc0"/><stop offset="1" stop-color="#6ee35a"/></linearGradient></defs><path d="M0 19C0 8 8 0 18 0s18 7 18 15c0 6-5 9-9 9-5 0-6-2-5-4 3-5-1-10-7-10C8 10 2 13 0 19z" fill="url(#e1)"/><path d="M0 19c1-6 7-9 13-9 4 0 7 1.500 8.500 3.500C14 13 10 19 12 25s8 9 13 8c-3 3-8 3-10 3C6 35 0 28 0 19z" fill="#1582dc"/><path d="M16 13c-6 4-5 13 2 17 5 3 11 1 15-3-3 6-8 9-13 8-7-1-11-8-9.500-14 .7-4 3-7 5.500-8z" fill="#104f9e"/></svg></div>
  <div class="app"><svg width="32" height="32" viewBox="0 0 32 32"><path d="M0 0h32v32H0z" fill="#ffd500"/><path d="M16 16h16L16 32z" fill="#4a463c"/><path d="M32 16v16H16z" fill="#f6b60d"/></svg></div>
  <div class="app"><svg width="36" height="36" viewBox="0 0 36 36"><path d="M18 18 2.400 9A18 18 0 0 1 33.600 9z" fill="#e33b2e"/><path d="M18 18 2.400 9a18 18 0 0 0 15.600 27z" fill="#2da94f"/><path d="M18 18h-1l1 18A18 18 0 0 0 33.600 9H18z" fill="#fdd023"/><path d="M18 18 10 22 18 36l8-14z" fill="#fdd023"/><path d="M2.400 9 10.500 22 18 26l-4 9.600A18 18 0 0 1 2.400 9z" fill="#2da94f"/><circle cx="18" cy="18" r="8.600" fill="#fff"/><circle cx="18" cy="18" r="6.800" fill="#3f80ee"/></svg></div>
  <div class="app"><svg width="36" height="32" viewBox="0 0 36 32"><path d="M8 2q0-2 2-2h24q2 0 2 2v6H8z" fill="#41a5ee"/><path d="M8 8h28v8H8z" fill="#2b7cd3"/><path d="M8 16h28v8H8z" fill="#185abd"/><path d="M8 24h28v6q0 2-2 2H10q-2 0-2-2z" fill="#103f91"/><rect y="7" width="18" height="18" rx="1.500" fill="#185abd"/><path d="M4 11l2.500 10L9 12l2.500 9L14 11" fill="none" stroke="#fff" stroke-width="1.900"/></svg></div>
  <div class="app cur run"><svg width="36" height="32"><use href="#xl" width="36" height="32"/></svg></div>
  <div class="app run"><svg width="31" height="32" viewBox="0 0 33 33"><path d="M27 2h4l1 26-6 5z" fill="#c08a44"/><path d="M13 1 30 2 27 33 1 27z" fill="#57a5b5"/><path d="M13 5 22 5 13 30 2 27z" fill="#bfe6ec"/><path d="M22 5l7 1-2 26-14-3z" fill="#8cc6d0"/><path d="M13 0 31 1v4L12 4z" fill="#e8ecec" stroke="#8a9494" stroke-dasharray="1.500 1.500"/></svg></div>
  <div class="app run"><svg width="32" height="32" viewBox="0 0 32 32"><defs><linearGradient id="ph" x2="1" y2="1"><stop offset=".3" stop-color="#22b0ee"/><stop offset="1" stop-color="#b083e0"/></linearGradient></defs><path d="M0 0h32v32H0z" fill="url(#ph)"/><path d="M32 26 24 15l-6 7 9 10h5z" fill="#5577d8"/><path d="M0 20 10 11l19 21H0z" fill="#14478f"/><circle cx="21" cy="8" r="3.500" fill="#fff"/></svg></div>
  <svg class="w" width="22" height="24" viewBox="0 0 22 24"><circle cx="15.500" cy="4.500" r="4"/><path d="M9.500 12.500Q12 8.500 15.500 8.500q5 0 6 5.500"/><circle cx="6.500" cy="14" r="4"/><path d="M.7 23.500Q1.500 18 6.500 18t6 5.500"/></svg>
  <svg class="w" width="36" height="25" viewBox="0 0 36 25"><path d="M1.500 1.500h29v19M30 6h4.500v14q0 3-3 3h-27q-3 0-3-3V1.500" stroke-width="2.500"/><path d="M6 7h20M18 12h8M18 16h8M18 20h8" stroke-width="2"/><path d="M6.500 12h8v7h-8z" stroke-width="2.500"/></svg>
  <span class="temp">62°F</span>
  <svg class="w" width="19" height="11" viewBox="0 0 19 11"><path d="M.7 10.500 9.500 1.500l8.800 9"/></svg>
  <svg class="w" width="17" height="23" viewBox="0 0 17 23"><rect x="1" y="6" width="10" height="11" rx="2"/><path d="M11 10l5-3.500v10L11 13M2 2.500q5-3 11 0M2 20.500q5 3 11 0"/></svg>
  <svg class="w" width="25" height="20" viewBox="0 0 25 20"><path d="M5 6h17v11H4V10" /><path d="M7 8h13v7.500H6z" fill="#fff"/><path d="M23.500 9.500v4M2.500 0v4M6 0v4M.7 4h7v3q-1 3-3.500 3T.7 7z"/></svg>
  <svg class="w" width="21" height="19" viewBox="0 0 21 19"><path d="M1 6h3l5-5v17l-5-5H1zM13 6l7 7M20 6l-7 7"/></svg>
  <svg class="w" width="25" height="24" viewBox="0 0 25 24"><circle cx="12" cy="12" r="11.200"/><ellipse cx="12" cy="12" rx="5.500" ry="11.200"/><path d="M1 8h22M1 16h14"/><circle cx="18.500" cy="18" r="5.200" fill="#1f2e37"/><path d="M15 14.500l7 7"/></svg>
  <span>ENG</span>
  <div class="clock">11:29 AM<br>5/19/2023</div>
  <svg class="w" width="25" height="25" viewBox="0 0 25 25"><path d="M1 1h23v18h-8l-3.500 4.500L9 19H1z"/></svg>
  <svg width="2" height="60"><path d="M1 0v60" stroke="#7d878b" stroke-width="1.500"/></svg>
</footer>
</body>
</html>
